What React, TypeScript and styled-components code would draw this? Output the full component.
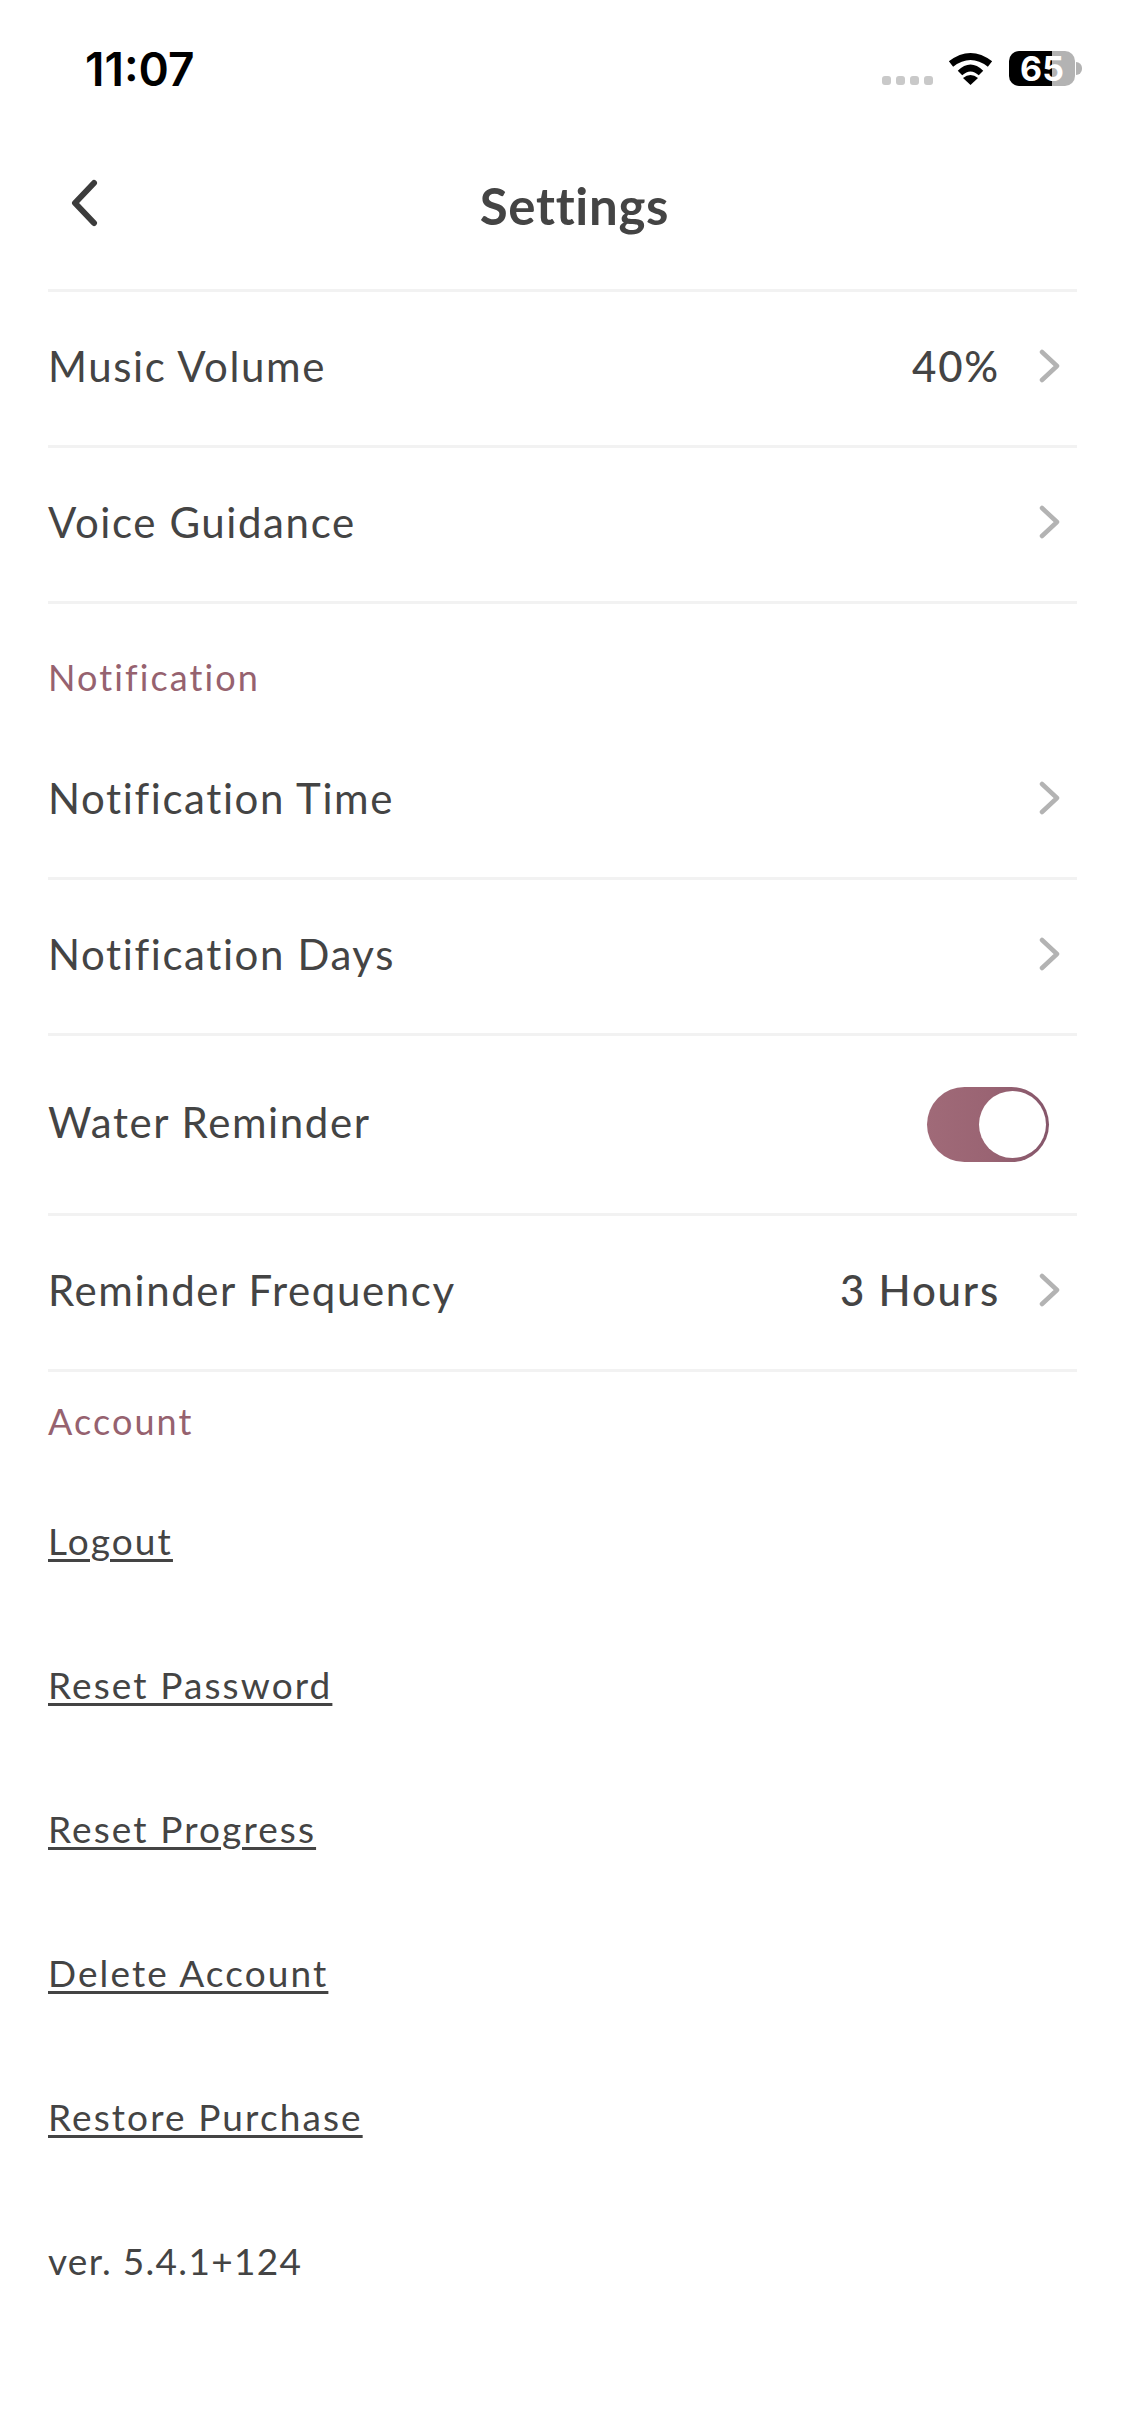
import React from "react";
import styled, { createGlobalStyle } from "styled-components";

const GlobalStyle = createGlobalStyle`
  html, body {
    margin: 0;
    padding: 0;
    background: #fff;
  }
  * {
    box-sizing: border-box;
  }
`;

const ink = "#444444";
const plum = "#96626f";
const line = "#f2f2f2";

const Page = styled.div`
  width: 1125px;
  height: 2436px;
  overflow: hidden;
  background: #fff;
  font-family: "Lato", "Open Sans", sans-serif;
  color: ${ink};
`;

const StatusBar = styled.div`
  height: 136px;
  padding: 51px 50px 0 85px;
  display: flex;
  justify-content: space-between;
  align-items: flex-start;
`;

const Clock = styled.span`
  font-family: "Inter", sans-serif;
  font-size: 46px;
  line-height: 36px;
  font-weight: 600;
  color: #000;
`;

const StatusIcons = styled.div`
  display: flex;
  align-items: flex-end;
  height: 35px;
`;

const SignalDots = styled.div`
  display: flex;
  gap: 5px;
  margin-right: 15px;
  margin-bottom: 1px;
`;

const SignalDot = styled.i`
  display: block;
  width: 9px;
  height: 9px;
  border-radius: 3px;
  background: #c9c9c9;
`;

const WifiIcon = styled.svg`
  width: 45px;
  height: 33px;
  margin-right: 16px;
  margin-bottom: 1px;
`;

const Battery = styled.div`
  position: relative;
  width: 66px;
  height: 35px;
  border-radius: 10px;
  background: linear-gradient(to right, #000 0, #000 43px, #b3b3b3 43px);
  color: #fff;
  font-family: "Inter", sans-serif;
  font-size: 34px;
  font-weight: 700;
  line-height: 35px;
  text-align: center;
`;

const BatteryNub = styled.i`
  position: absolute;
  left: 67px;
  top: 11px;
  width: 6px;
  height: 13px;
  border-radius: 0 7px 7px 0;
  background: #b3b3b3;
`;

const NavBar = styled.header`
  height: 153px;
  padding: 0 48px 6px;
  display: grid;
  grid-template-columns: 100px 1fr 100px;
  align-items: center;
`;

const Title = styled.h1`
  margin: 0;
  padding: 0 0 9px 24px;
  text-align: center;
  font-size: 51px;
  font-weight: 700;
  letter-spacing: 0.7px;
  color: ${ink};
`;

const BackIcon = styled.svg`
  width: 30px;
  height: 48px;
  margin: 0 0 14px 22px;
`;

const List = styled.section`
  margin: 0 48px;
`;

const Row = styled.div<{ $tall?: boolean }>`
  height: ${(p) => (p.$tall ? 180 : 156)}px;
  padding-bottom: 6px;
  display: flex;
  align-items: center;
  border-bottom: 3px solid ${line};
`;

const TopRule = styled.div`
  height: 3px;
  background: ${line};
`;

const RowLabel = styled.span`
  flex: 1;
  font-size: 42px;
  font-weight: 400;
  letter-spacing: 1.6px;
`;

const RowValue = styled.span`
  font-size: 42px;
  font-weight: 500;
  letter-spacing: 1.8px;
  margin-right: 39px;
`;

const Chevron = styled.svg`
  width: 22px;
  height: 34px;
  margin-right: 16px;
`;

const SectionTitle = styled.h2<{ $height: number; $top?: number }>`
  margin: 0;
  height: ${(p) => p.$height}px;
  padding-top: ${(p) => p.$top ?? 0}px;
  display: flex;
  align-items: center;
  font-size: 36px;
  font-weight: 400;
  letter-spacing: 2.1px;
  color: ${plum};
`;

const Toggle = styled.div`
  position: relative;
  width: 122px;
  height: 75px;
  margin: 5px 28px 0 0;
  border-radius: 38px;
  background: linear-gradient(to right, #a06a78 0, #9a6473 50%, #85566a 100%);
`;

const ToggleKnob = styled.i`
  position: absolute;
  top: 4px;
  right: 3px;
  width: 67px;
  height: 67px;
  border-radius: 50%;
  background: #fff;
`;

const LinkRow = styled.div`
  height: 144px;
  display: flex;
  align-items: center;
  font-size: 37px;
  letter-spacing: 2.1px;
`;

const VersionRow = styled(LinkRow)`
  letter-spacing: 1.3px;
`;

const AccountLink = styled.a`
  color: ${ink};
  text-decoration: underline;
  text-decoration-thickness: 3px;
  text-underline-offset: 4px;
`;

const RowChevron = () => (
  <Chevron viewBox="0 0 22 34" fill="none">
    <path d="M3 3 L18 17 L3 31" stroke="#b3b3b3" strokeWidth="4.5" strokeLinecap="round" strokeLinejoin="round" />
  </Chevron>
);

const links = ["Logout", "Reset Password", "Reset Progress", "Delete Account", "Restore Purchase"];

const App = () => (
  <Page>
    <GlobalStyle />
    <StatusBar>
      <Clock>11:07</Clock>
      <StatusIcons>
        <SignalDots>
          <SignalDot />
          <SignalDot />
          <SignalDot />
          <SignalDot />
        </SignalDots>
        <WifiIcon viewBox="0 0 45 33" fill="none">
          <path d="M3 12 Q22.5 -3 42 12" stroke="#000" strokeWidth="7" />
          <path d="M12 21 Q22.5 11 33 21" stroke="#000" strokeWidth="6.5" />
          <path d="M15 26 Q22.5 20 30 26 L22.5 33 Z" fill="#000" />
        </WifiIcon>
        <Battery>
          65
          <BatteryNub />
        </Battery>
      </StatusIcons>
    </StatusBar>

    <NavBar>
      <BackIcon viewBox="0 0 30 48" fill="none">
        <path d="M24 4 L5 24 L24 44" stroke="#3c3c3c" strokeWidth="6" strokeLinecap="round" strokeLinejoin="round" />
      </BackIcon>
      <Title>Settings</Title>
    </NavBar>

    <List>
      <TopRule />
      <Row>
        <RowLabel>Music Volume</RowLabel>
        <RowValue>40%</RowValue>
        <RowChevron />
      </Row>
      <Row>
        <RowLabel>Voice Guidance</RowLabel>
        <RowChevron />
      </Row>

      <SectionTitle $height={120} $top={26}>
        Notification
      </SectionTitle>
      <Row>
        <RowLabel>Notification Time</RowLabel>
        <RowChevron />
      </Row>
      <Row>
        <RowLabel>Notification Days</RowLabel>
        <RowChevron />
      </Row>
      <Row $tall>
        <RowLabel>Water Reminder</RowLabel>
        <Toggle>
          <ToggleKnob />
        </Toggle>
      </Row>
      <Row>
        <RowLabel>Reminder Frequency</RowLabel>
        <RowValue>3 Hours</RowValue>
        <RowChevron />
      </Row>

      <SectionTitle $height={96} $top={2}>
        Account
      </SectionTitle>
      {links.map((label) => (
        <LinkRow key={label}>
          <AccountLink>{label}</AccountLink>
        </LinkRow>
      ))}
      <VersionRow>ver. 5.4.1+124</VersionRow>
    </List>
  </Page>
);

export default App;
